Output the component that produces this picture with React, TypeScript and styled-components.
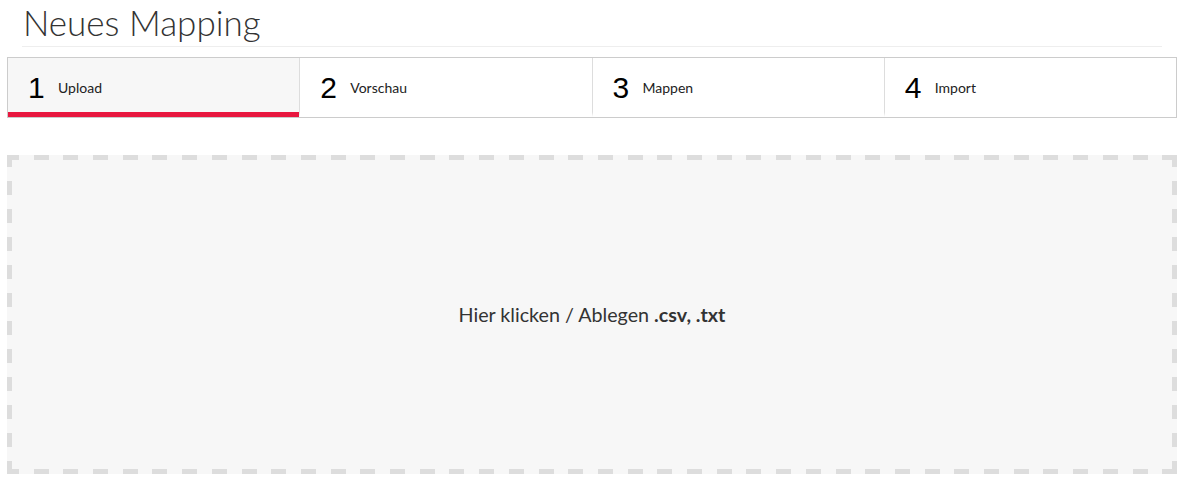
import React from 'react';
import styled, { createGlobalStyle } from 'styled-components';

const GlobalStyle = createGlobalStyle`
  body {
    margin: 0;
    background: #fff;
    font-family: Lato, "Open Sans", sans-serif;
    color: #333;
  }
`;

const Page = styled.div`
  padding: 0 9px 0 7px;
  width: 1186px;
  box-sizing: border-box;
`;

const Header = styled.div`
  margin: 0 15px 0 15px;
  border-bottom: 1px solid #eee;
  height: 46px;
`;

const Title = styled.h1`
  margin: 0;
  padding: 3px 0 0 1px;
  font-size: 35px;
  font-weight: 300;
  line-height: 38px;
  color: #333;
`;

const Steps = styled.div`
  display: flex;
  margin-top: 10px;
  border: 1px solid #ccc;
  height: 59px;
`;

const Step = styled.div<{ $active?: boolean }>`
  flex: 1 1 0;
  display: flex;
  align-items: center;
  padding: 0 0 0 20px;
  background: ${(p) => (p.$active ? '#f7f7f7' : '#fff')};
  border-bottom: 5px solid ${(p) => (p.$active ? '#e8173f' : 'transparent')};
  & + & {
    border-left: 1px solid #ddd;
  }
`;

const StepNumber = styled.span`
  font-family: "Liberation Sans", Arial, sans-serif;
  font-size: 30px;
  color: #000;
  width: 30px;
  margin-top: 5px;
`;

const StepLabel = styled.span`
  font-size: 14px;
  color: #222;
  margin-top: 5px;
`;

// dashed frame drawn with gradients so the dash rhythm is fixed
const DropZone = styled.div`
  margin-top: 37px;
  height: 319px;
  box-sizing: border-box;
  padding: 5px;
  background-color: #f7f7f7;
  background-image:
    repeating-linear-gradient(to right, #ddd -3px 12px, transparent 12px 26.7px),
    repeating-linear-gradient(to right, #ddd -3px 12px, transparent 12px 26.7px),
    repeating-linear-gradient(to bottom, #ddd -2px 12px, transparent 12px 26px),
    repeating-linear-gradient(to bottom, #ddd -2px 12px, transparent 12px 26px);
  background-size: 100% 5px, 100% 5px, 5px 100%, 5px 100%;
  background-position: left top, left bottom, left top, right top;
  background-repeat: no-repeat;
  display: flex;
  align-items: center;
  justify-content: center;
  font-size: 19.7px;
  color: #333;
  cursor: pointer;

  & b {
    font-weight: 700;
    margin-left: 5px;
  }
`;

const steps = ['Upload', 'Vorschau', 'Mappen', 'Import'];

const App: React.FC = () => {
  return (
    <Page>
      <GlobalStyle />
      <Header>
        <Title>Neues Mapping</Title>
      </Header>
      <Steps>
        {steps.map((label, i) => (
          <Step key={label} $active={i === 0}>
            <StepNumber>{i + 1}</StepNumber>
            <StepLabel>{label}</StepLabel>
          </Step>
        ))}
      </Steps>
      <DropZone>
        Hier klicken / Ablegen <b>.csv, .txt</b>
      </DropZone>
    </Page>
  );
};

export default App;
